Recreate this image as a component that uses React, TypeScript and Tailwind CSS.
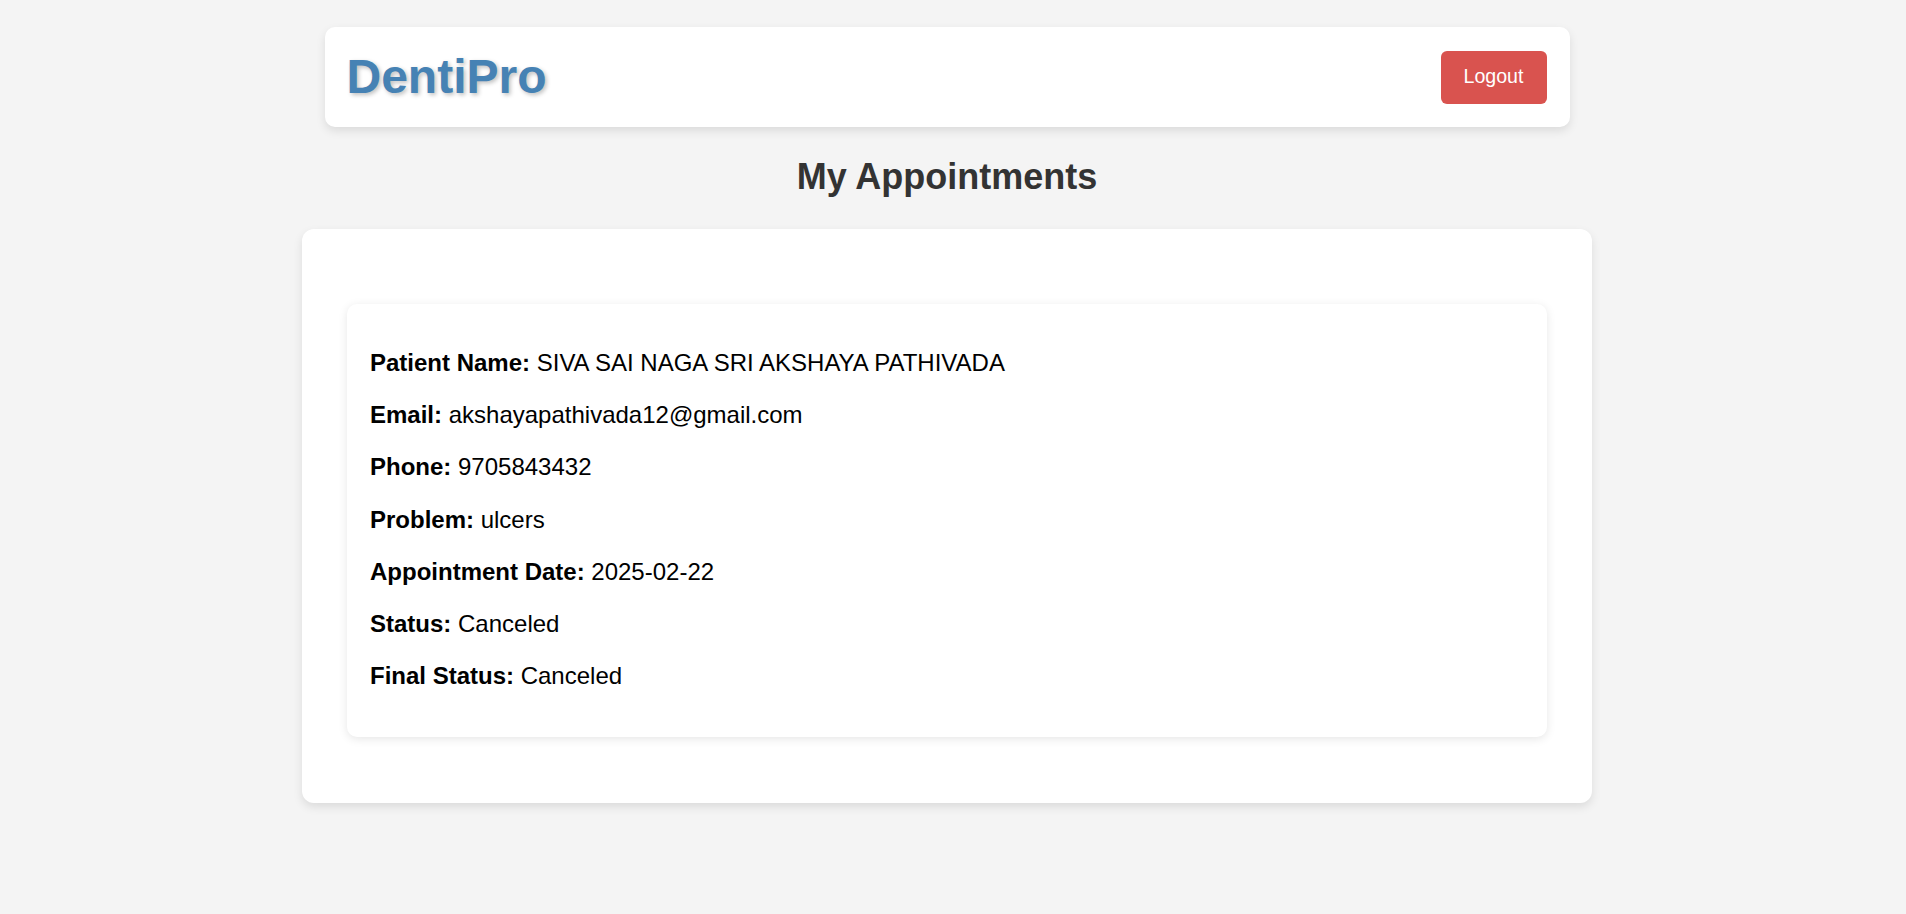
const rows: [string, string][] = [
  ['Patient Name:', 'SIVA SAI NAGA SRI AKSHAYA PATHIVADA'],
  ['Email:', 'akshayapathivada12@gmail.com'],
  ['Phone:', '9705843432'],
  ['Problem:', 'ulcers'],
  ['Appointment Date:', '2025-02-22'],
  ['Status:', 'Canceled'],
  ['Final Status:', 'Canceled'],
];

export default function App() {
  return (
    <div className="min-h-[914px] bg-[#f4f4f4] font-['Liberation_Sans',Arial,sans-serif] pr-[12px] flex flex-col items-center">
      <header className="mt-[27px] w-[1245px] h-[100px] bg-white rounded-[10px] shadow-[0_4px_10px_rgba(0,0,0,0.1)] flex items-center justify-between pl-[22px] pr-[23px]">
        <h1 className="text-[48px] font-bold text-[#4682b4] [text-shadow:2px_2px_4px_rgba(0,0,0,0.25)]">DentiPro</h1>
        <button className="w-[106px] h-[53px] rounded-[6px] bg-[#d9534f] text-white text-[19.6px]">Logout</button>
      </header>

      <h2 className="mt-[30px] mb-[32px] text-[36px] leading-[40px] font-bold text-[#333]">My Appointments</h2>

      <div className="w-[1290px] bg-white rounded-[12px] shadow-[0_4px_10px_rgba(0,0,0,0.1)] pt-[75px] pb-[66px] px-[45px]">
        <div className="h-[433px] bg-white rounded-[10px] shadow-[0_2px_10px_rgba(0,0,0,0.1)] pt-[45px] px-[23px] flex flex-col gap-[25.2px] text-[24px] leading-[27px] text-black">
          {rows.map(([k, v]) => (
            <p key={k}>
              <strong className="font-bold">{k}</strong> {v}
            </p>
          ))}
        </div>
      </div>
    </div>
  );
}
